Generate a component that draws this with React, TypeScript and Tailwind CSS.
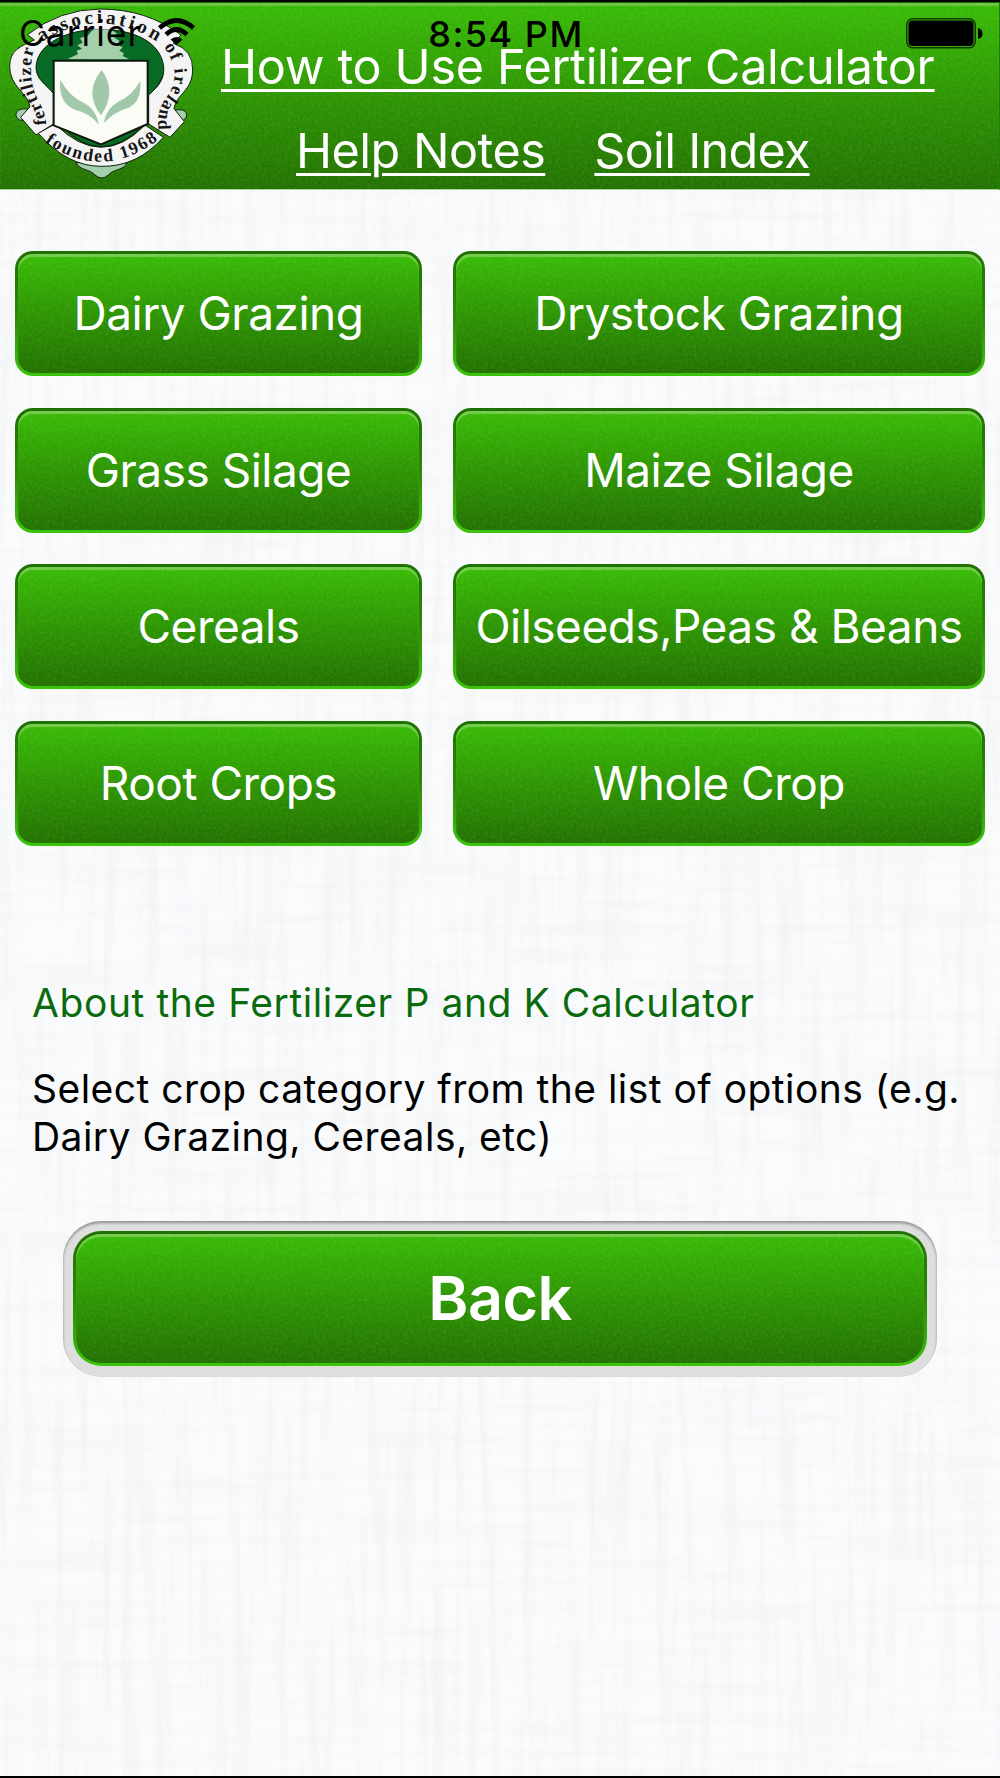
import { ReactNode } from "react";
import clsx from "clsx";

const crops = [
  ["Dairy Grazing", "Drystock Grazing"],
  ["Grass Silage", "Maize Silage"],
  ["Cereals", "Oilseeds,Peas & Beans"],
  ["Root Crops", "Whole Crop"],
];

// fine speckle laid over the green surfaces
const Grain = () => (
  <svg className="absolute inset-0 h-full w-full opacity-[0.07]">
    <filter id="grain">
      <feTurbulence type="fractalNoise" baseFrequency="0.34" numOctaves="2" seed="4" />
      <feColorMatrix values="0 0 0 0 1  0 0 0 0 1  0 0 0 0 0.8  2.2 0 0 0 -0.8" />
    </filter>
    <rect width="100%" height="100%" filter="url(#grain)" />
  </svg>
);

// linen background, vertical threads and horizontal threads
const Linen = () => (
  <svg className="absolute inset-0 h-full w-full">
    <filter id="warp" x="0" y="0" width="100%" height="100%">
      <feTurbulence type="fractalNoise" baseFrequency="0.09 0.005" numOctaves="3" seed="7" />
      <feColorMatrix values="0 0 0 0 0.82  0 0 0 0 0.84  0 0 0 0 0.85  2.4 0 0 0 -1.05" />
    </filter>
    <filter id="weft" x="0" y="0" width="100%" height="100%">
      <feTurbulence type="fractalNoise" baseFrequency="0.006 0.09" numOctaves="3" seed="12" />
      <feColorMatrix values="0 0 0 0 0.82  0 0 0 0 0.84  0 0 0 0 0.85  2.4 0 0 0 -1.05" />
    </filter>
    <rect width="100%" height="100%" filter="url(#warp)" opacity="0.42" />
    <rect width="100%" height="100%" filter="url(#weft)" opacity="0.28" />
  </svg>
);

type buttonProps = {
  children: ReactNode;
  large?: boolean;
};

const GreenButton = ({ children, large }: buttonProps) => (
  <button
    className={clsx(
      "block w-full bg-linear-to-b from-[#1f7003] via-[#2b8a06] to-[#3cc40c] p-[3px]",
      large ? "h-[135px] rounded-[28px]" : "h-[125px] rounded-[18px]"
    )}
  >
    <span
      className={clsx(
        "relative flex h-full w-full items-center justify-center overflow-hidden bg-linear-to-b from-[#37b806] from-5% to-[#227101] whitespace-nowrap text-white shadow-[inset_0_3px_1px_#74cc4c]",
        large ? "rounded-[25px]" : "rounded-[15px]"
      )}
    >
      <Grain />
      <span
        className={clsx(
          "relative",
          large ? "top-px text-[61px] font-semibold tracking-[-0.5px]" : "text-[46px] tracking-[-0.5px]"
        )}
      >
        {children}
      </span>
    </span>
  </button>
);

const Logo = () => (
  <svg viewBox="0 0 630 600" className="h-[200px] w-[210px] shrink-0">
    <defs>
      <path id="top" d="M124 126 Q300 14 476 128" />
      <path id="left" d="M138 374 C138 318 93 290 93 218 C93 178 96 160 110 136" />
      <path id="right" d="M492 140 C532 200 532 240 504 285 C474 325 470 350 478 408" />
      <path id="bottom" d="M134 426 Q306 548 478 418" />
    </defs>
    <g stroke="#10220f" strokeWidth="3" strokeLinejoin="round">
      <path fill="#a3cfab" d="M228 488 C240 512 268 506 285 525 Q306 543 325 525 C342 506 370 512 382 488Z" />
      <path fill="#a3cfab" d="M85 328 C48 320 38 348 58 360 L95 362Z M522 332 C558 320 572 348 548 362 L520 364Z" />
      <path fill="#076b25" d="M300 86 C190 82 100 140 106 200 C110 245 160 280 185 380 Q305 500 425 380 C440 280 495 245 494 200 C490 130 410 86 300 86Z" />
      <path
        fill="#f4f4f4"
        d="M82 104 Q180 28 300 27 Q440 27 543 105 L520 130 Q580 150 578 210 C576 275 530 280 522 326 L553 365 L510 412 L446 372 L446 285 C474 260 494 240 491 200 C482 125 400 88 300 88 C205 88 113 128 108 200 C108 240 138 252 160 280 L160 372 L108 405 L62 352 L90 320 C84 278 28 260 29 198 C30 150 60 140 103 120Z"
      />
      <path fill="#f4f4f4" d="M115 400 L165 372 Q305 510 435 375 L490 412 Q412 500 306 499 Q202 500 115 400Z" />
    </g>
    <path
      fill="#a3cfab"
      d="M202 177 L222 168 L234 162 L230 152 L246 146 L232 136 L248 128 L240 114 L262 108 L280 88 L330 88 L350 100 L342 112 L358 122 L352 134 L368 142 L358 152 L372 160 L368 168 L388 178Z"
    />
    <path fill="#fbfcf6" stroke="#0d180c" strokeWidth="6" d="M161 182 H443 V372 L303 433 L161 376Z" />
    <g fill="#a1c9a9">
      <path d="M305 210 Q352 275 303 346 Q250 278 305 210Z" />
      <path d="M181 240 Q210 292 252 309 Q288 326 297 374 Q270 340 227 330 Q174 310 181 240Z" />
      <path d="M421 243 Q395 288 357 304 Q318 325 311 370 Q345 334 382 325 Q425 308 421 243Z" />
    </g>
    <g fill="#161616" className="font-['Liberation_Serif',serif] font-bold">
      <text className="text-[58px]">
        <textPath href="#top" textLength="368">association</textPath>
      </text>
      <text className="text-[54px]">
        <textPath href="#left" textLength="235">fertilizer</textPath>
      </text>
      <text className="text-[54px]">
        <textPath href="#right" textLength="268">of ireland</textPath>
      </text>
      <text className="text-[53px]">
        <textPath href="#bottom" textLength="368">founded 1968</textPath>
      </text>
    </g>
  </svg>
);

const StatusBar = () => (
  <div className="absolute inset-x-0 top-[12px] flex h-10 items-center text-black">
    <div className="flex flex-1 items-center gap-[16px] pl-[19px]">
      <span className="text-[35.5px] tracking-[0.9px]">Carrier</span>
      <svg viewBox="0 0 37 28" className="-mt-[5px] h-7 w-[37px]" fill="none" stroke="black" strokeWidth="4.6">
        <path d="M1.5 10 Q18.5 -5 35.5 10" />
        <path d="M8 16.5 Q18.5 6.5 29 16.5" />
        <path d="M18.5 27 L12.5 21.5 Q18.5 16.5 24.5 21.5Z" fill="black" stroke="none" />
      </svg>
    </div>
    <span className="relative left-[5px] text-[36px] font-medium tracking-[1.5px]">8:54 PM</span>
    <div className="flex flex-1 justify-end pr-[17px]">
      <svg viewBox="0 0 77 31" className="-mt-[2px] h-[31px] w-[77px]">
        <rect x="0.75" y="0.75" width="68.5" height="29" rx="6" fill="none" stroke="#0c3a02" strokeWidth="1.5" />
        <rect x="2.5" y="2.5" width="65" height="25.5" rx="4" />
        <path d="M72 10 Q76.5 11 76.5 15.5 Q76.5 20 72 21Z" />
      </svg>
    </div>
  </div>
);

const linkStyle =
  "text-[48.5px] leading-[58px] whitespace-nowrap underline decoration-[3px] underline-offset-[5px]";

export default function App() {
  return (
    <div className="relative flex h-[1778px] w-[1000px] flex-col overflow-hidden border-y-2 border-black bg-[#fafbfd] font-[Inter,sans-serif]">
      <Linen />
      <header className="relative h-[188px] shrink-0 border-t border-[#1e6a04] border-r border-r-[#1f7d04] border-b border-b-[#a9d79a] bg-linear-to-b from-[#37b806] from-5% to-[#227101] shadow-[inset_0_3px_1px_#68c63f]">
        <Grain />
        <div className="relative -mt-[3px] flex">
          <Logo />
          <nav className="flex flex-col pt-[38px] text-white">
            <a className={clsx(linkStyle, "ml-[11px] tracking-[-0.3px]")}>How to Use Fertilizer Calculator</a>
            <div className="mt-[26px] ml-[86px] flex gap-[49px]">
              <a className={clsx(linkStyle, "tracking-[-0.5px]")}>Help Notes</a>
              <a className={clsx(linkStyle, "tracking-[-0.7px]")}>Soil Index</a>
            </div>
          </nav>
        </div>
      </header>
      <StatusBar />
      <main className="relative">
        <div className="grid grid-cols-[407px_532px] gap-x-[31px] gap-y-[31.5px] pt-[61px] pl-[15px]">
          {crops.flat().map((name) => (
            <GreenButton key={name}>{name}</GreenButton>
          ))}
        </div>
        <section className="mt-[133px] px-8 text-[39px] leading-[48px] tracking-[0.46px] whitespace-nowrap">
          <h2 className="tracking-[0.57px] text-[#0a6b0c]">About the Fertilizer P and K Calculator</h2>
          <p className="mt-[38px] text-black">
            Select crop category from the list of options (e.g.
            <br />
            Dairy Grazing, Cereals, etc)
          </p>
        </section>
        <div className="mt-[60px] ml-[63px] w-[874px] rounded-[38px] bg-[#dedede] p-[10px] pb-[11px] shadow-[inset_0_2px_3px_#8f8f8f]">
          <GreenButton large>Back</GreenButton>
        </div>
      </main>
    </div>
  );
}
